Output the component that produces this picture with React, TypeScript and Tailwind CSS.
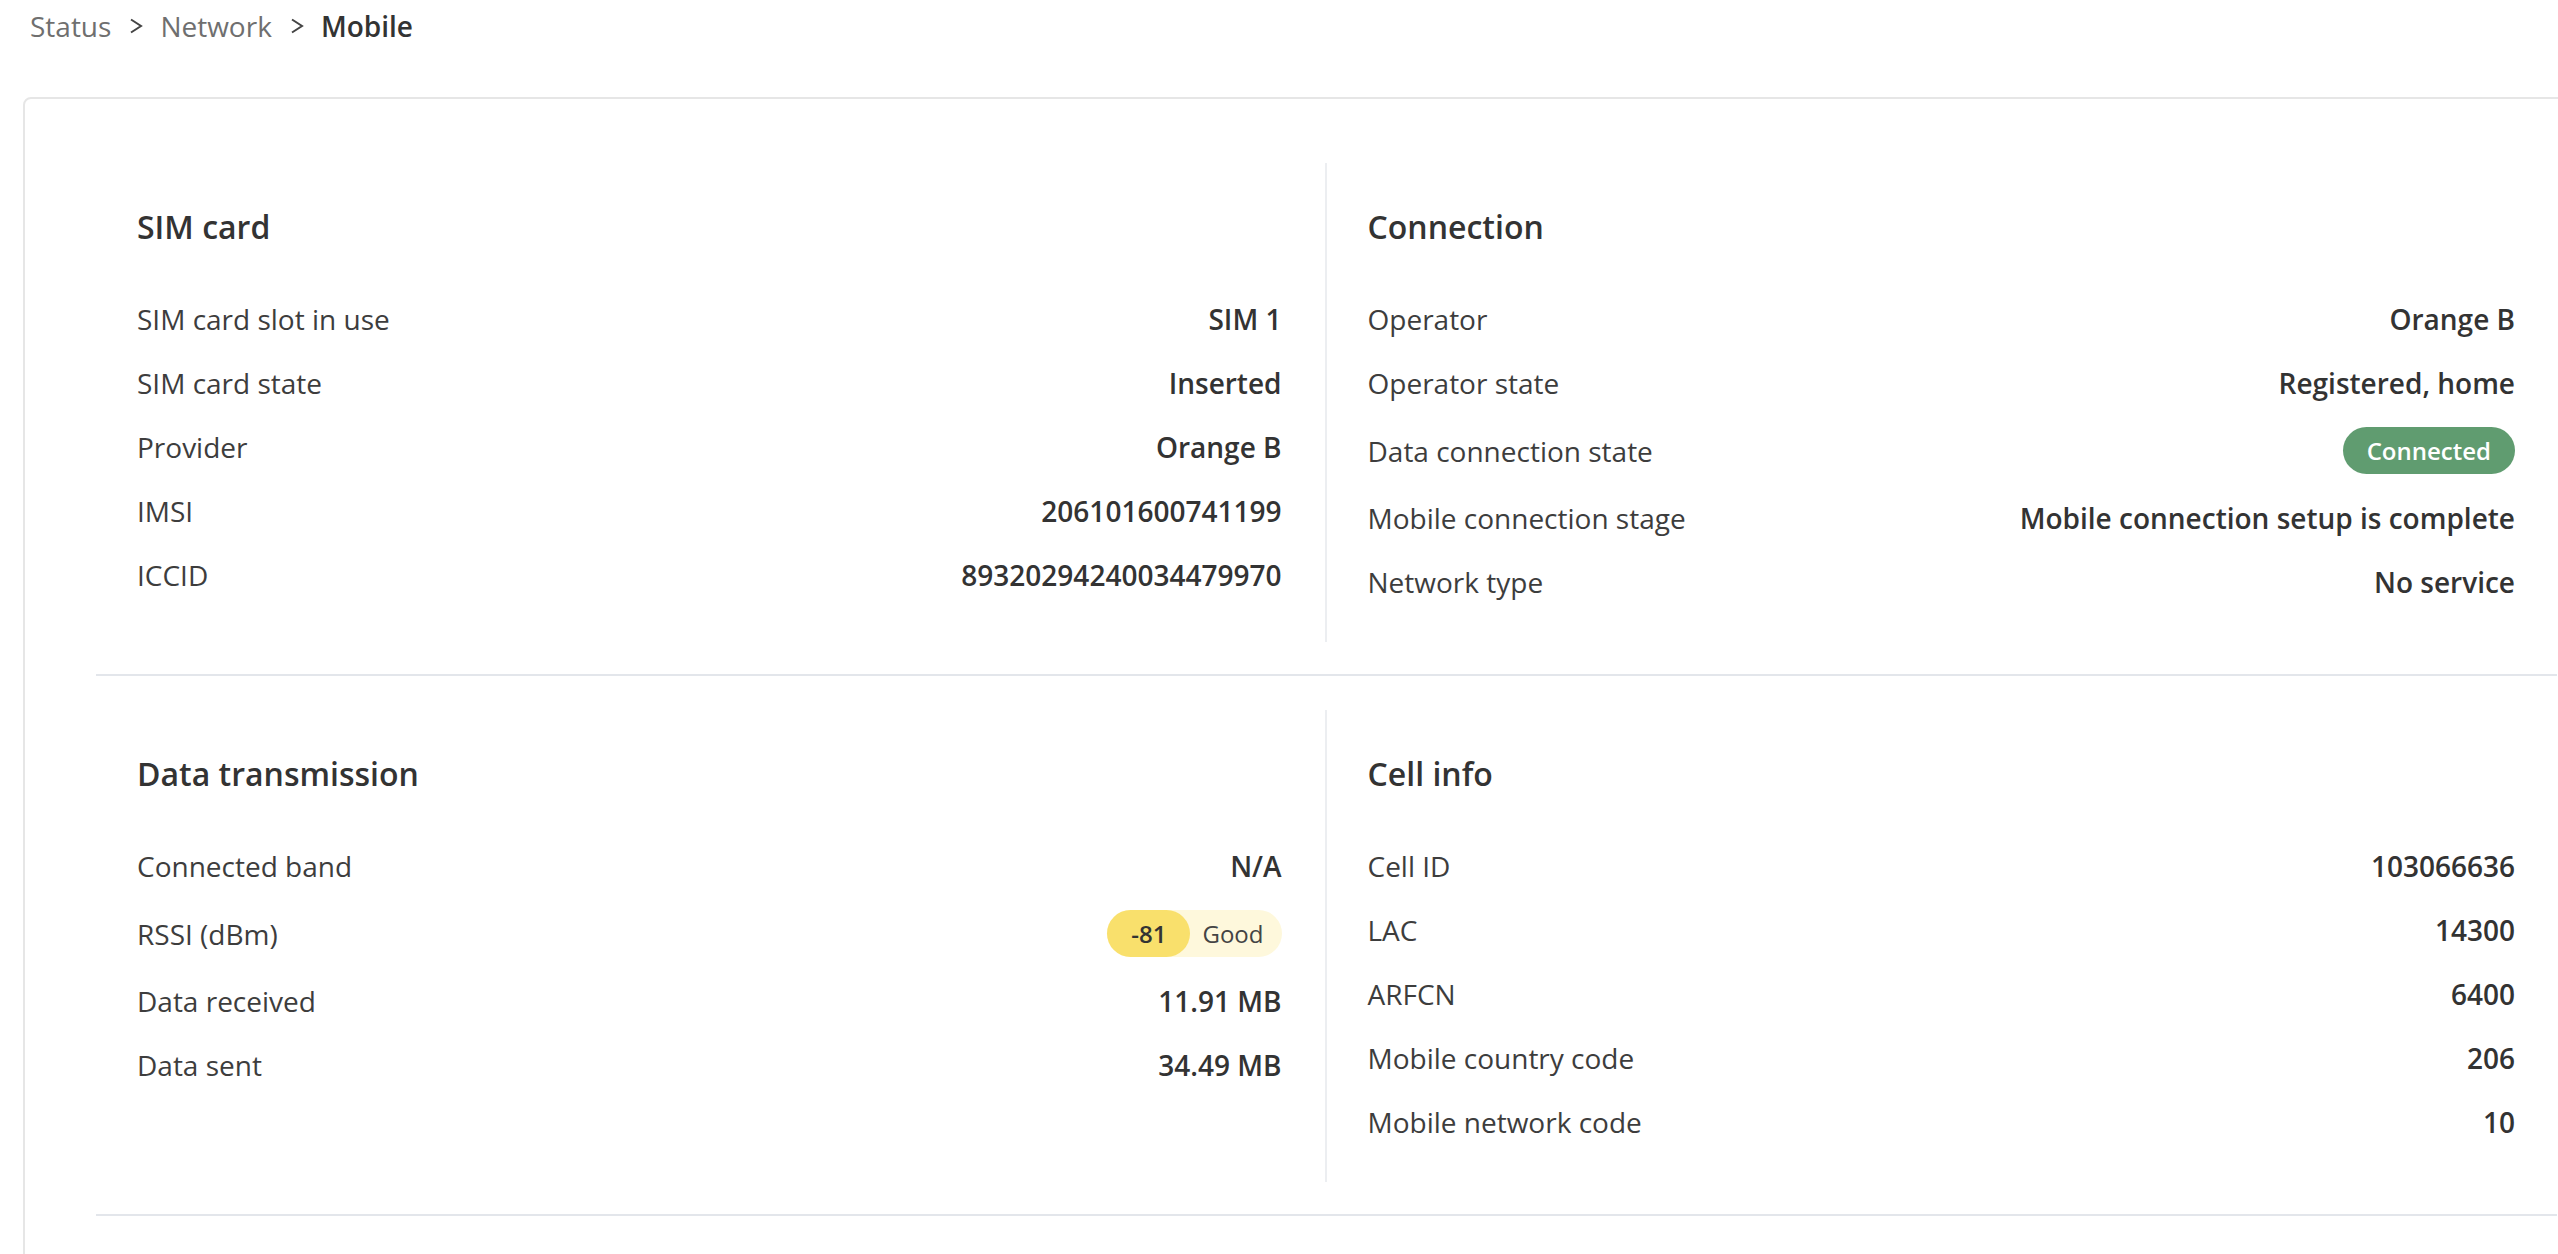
import React from "react";

type RowData = { label: string; value: React.ReactNode };

function Chevron() {
  return (
    <svg width="14" height="16" viewBox="0 0 14 16" className="ml-[18px] mr-[17px] shrink-0" aria-hidden="true">
      <polyline points="2,1.5 12,8 2,14.5" fill="none" stroke="#444444" strokeWidth="2" strokeLinejoin="miter" />
    </svg>
  );
}

function ConnectedPill() {
  return (
    <span className="my-[1px] inline-flex h-[47px] items-center rounded-full bg-[#609c70] px-6 text-[24px] font-semibold leading-none text-white">
      Connected
    </span>
  );
}

function RssiPill() {
  return (
    <span className="my-[1px] inline-flex h-[47px] items-stretch rounded-full bg-[#fef8dc] text-[24px] leading-none">
      <span className="flex items-center rounded-full bg-[#f9e06c] px-[24px] font-semibold text-[#333333]">-81</span>
      <span className="flex items-center pl-[12px] pr-[18px] text-[#444444]">Good</span>
    </span>
  );
}

function Row({ label, value }: RowData) {
  return (
    <div className="flex items-center justify-between py-[11px] text-[28px] leading-[42px]">
      <span className="text-[#3d3d3d]">{label}</span>
      {typeof value === "string" ? (
        <span className="font-semibold text-[#333333]">{value}</span>
      ) : (
        value
      )}
    </div>
  );
}

function Column({ title, rows, divider }: { title: string; rows: RowData[]; divider?: boolean }) {
  return (
    <div className={divider ? "border-r-2 border-[#eceef1] pb-[28px] pl-[41px] pr-[43px] pt-[38px]" : "pb-[28px] pl-[41px] pr-[42px] pt-[38px]"}>
      <h2 className="mb-[35px] text-[32px] font-semibold leading-[51px] text-[#333333]">{title}</h2>
      <div className="flex flex-col">
        {rows.map((r) => (
          <Row key={r.label} label={r.label} value={r.value} />
        ))}
      </div>
    </div>
  );
}

const simRows: RowData[] = [
  { label: "SIM card slot in use", value: "SIM 1" },
  { label: "SIM card state", value: "Inserted" },
  { label: "Provider", value: "Orange B" },
  { label: "IMSI", value: "206101600741199" },
  { label: "ICCID", value: "89320294240034479970" },
];

const connRows: RowData[] = [
  { label: "Operator", value: "Orange B" },
  { label: "Operator state", value: "Registered, home" },
  { label: "Data connection state", value: <ConnectedPill /> },
  { label: "Mobile connection stage", value: "Mobile connection setup is complete" },
  { label: "Network type", value: "No service" },
];

const dataRows: RowData[] = [
  { label: "Connected band", value: "N/A" },
  { label: "RSSI (dBm)", value: <RssiPill /> },
  { label: "Data received", value: "11.91 MB" },
  { label: "Data sent", value: "34.49 MB" },
];

const cellRows: RowData[] = [
  { label: "Cell ID", value: "103066636" },
  { label: "LAC", value: "14300" },
  { label: "ARFCN", value: "6400" },
  { label: "Mobile country code", value: "206" },
  { label: "Mobile network code", value: "10" },
];

export default function App() {
  return (
    <div className="h-[1254px] w-full overflow-hidden bg-white font-['Open_Sans','Liberation_Sans',sans-serif]">
      <nav className="flex items-center pl-[30px] pt-[5px] text-[28px] leading-[42px]">
        <span className="text-[#6f6f6f]">Status</span>
        <Chevron />
        <span className="text-[#6f6f6f]">Network</span>
        <Chevron />
        <span className="font-semibold text-[#333333]">Mobile</span>
      </nav>
      <div className="ml-[23px] mt-[50px] w-[2607px] rounded-[8px] border-2 border-[#e6e6e6] pb-[80px] pl-[71px] pr-[71px] pt-8">
        <section className="grid grid-cols-2 border-b-2 border-[#e3e6eb] pb-8 pt-8">
          <Column title="SIM card" rows={simRows} divider />
          <Column title="Connection" rows={connRows} />
        </section>
        <section className="grid grid-cols-2 border-b-2 border-[#e3e6eb] pb-8 pt-[34px]">
          <Column title="Data transmission" rows={dataRows} divider />
          <Column title="Cell info" rows={cellRows} />
        </section>
      </div>
    </div>
  );
}
